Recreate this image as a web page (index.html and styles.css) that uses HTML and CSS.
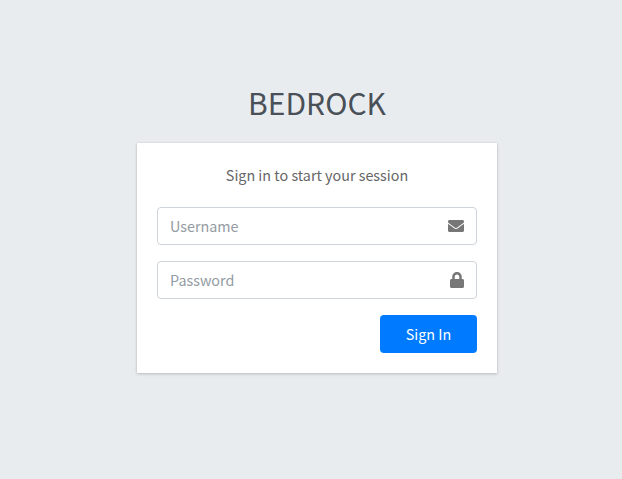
FILE: index.html
```html
<!DOCTYPE html>
<html lang="en">
<head>
<meta charset="utf-8">
<title>Bedrock</title>
<link rel="stylesheet" href="styles.css">
</head>
<body>
<main class="login-box">
  <h1 class="login-logo"><span>BEDROCK</span></h1>
  <form class="card">
    <p class="login-msg"><span>Sign in to start your session</span></p>
    <div class="input-group">
      <input type="text" placeholder="Username" aria-label="Username">
      <span class="icon"><svg width="16" height="16" viewBox="0 0 512 512"><path d="M502.300 190.800c3.900-3.100 9.700-.2 9.700 4.700V400c0 26.500-21.500 48-48 48H48c-26.500 0-48-21.500-48-48V195.600c0-5 5.700-7.800 9.700-4.700 22.400 17.400 52.100 39.500 154.100 113.600 21.100 15.400 56.700 47.800 92.200 47.600 35.700.3 72-32.800 92.300-47.600 102-74.100 131.600-96.300 154-113.700zM256 320c23.200.4 56.600-29.200 73.400-41.400 132.700-96.300 142.800-104.700 173.400-128.700 5.800-4.500 9.200-11.500 9.200-18.900v-19c0-26.500-21.500-48-48-48H48c-26.500 0-48 21.500-48 48v19c0 7.400 3.400 14.300 9.200 18.900 30.600 23.900 40.700 32.400 173.400 128.700 16.800 12.200 50.200 41.800 73.400 41.400z"/></svg></span>
    </div>
    <div class="input-group">
      <input type="password" placeholder="Password" aria-label="Password">
      <span class="icon"><svg width="14" height="16" viewBox="0 0 448 512"><path d="M400 224h-24v-72C376 68.200 307.800 0 224 0S72 68.200 72 152v72H48c-26.500 0-48 21.500-48 48v192c0 26.500 21.500 48 48 48h352c26.500 0 48-21.500 48-48V272c0-26.500-21.500-48-48-48zm-104 0H152v-72c0-39.700 32.300-72 72-72s72 32.300 72 72v72z"/></svg></span>
    </div>
    <button type="button"><span>Sign In</span></button>
  </form>
</main>
</body>
</html>
```
FILE: styles.css
```css
* {
  box-sizing: border-box;
}

body {
  margin: 0;
  height: 479px;
  overflow: hidden;
  background: #e9ecef;
  color: #495057;
  font: 400 14.35px/24px "Source Sans Pro", "Noto Sans CJK SC", sans-serif;
}

.login-box {
  width: 360px;
  margin-left: 137px;
  padding-top: 78px;
}

.login-logo {
  height: 51px;
  margin: 0 0 14px;
  font-size: 30px;
  font-weight: 400;
  line-height: 48px;
  text-align: center;
}

.card {
  display: flex;
  flex-direction: column;
  height: 230px;
  padding: 20px;
  background: #fff;
  box-shadow: 0 0 1px rgba(0, 0, 0, .125), 0 1px 3px rgba(0, 0, 0, .2);
}

.login-msg {
  margin: 0 0 20px;
  color: #666;
  text-align: center;
}

.input-group {
  display: flex;
  height: 38px;
  margin-bottom: 16px;
  border: 1px solid #ced4da;
  border-radius: 4px;
}

input {
  flex: 1;
  min-width: 0;
  padding: 0 12px;
  border: 0;
  background: transparent;
  color: #495057;
  font: inherit;
  outline: 0;
}

input::placeholder {
  color: #939ba2;
  opacity: 1;
}

.icon {
  display: flex;
  align-items: center;
  padding-right: 12px;
  fill: #777;
}

button {
  align-self: flex-end;
  width: 97px;
  height: 38px;
  flex-shrink: 0;
  padding: 0;
  border: 0;
  border-radius: 4px;
  background: #007bff;
  color: #fff;
  font: inherit;
}
```
